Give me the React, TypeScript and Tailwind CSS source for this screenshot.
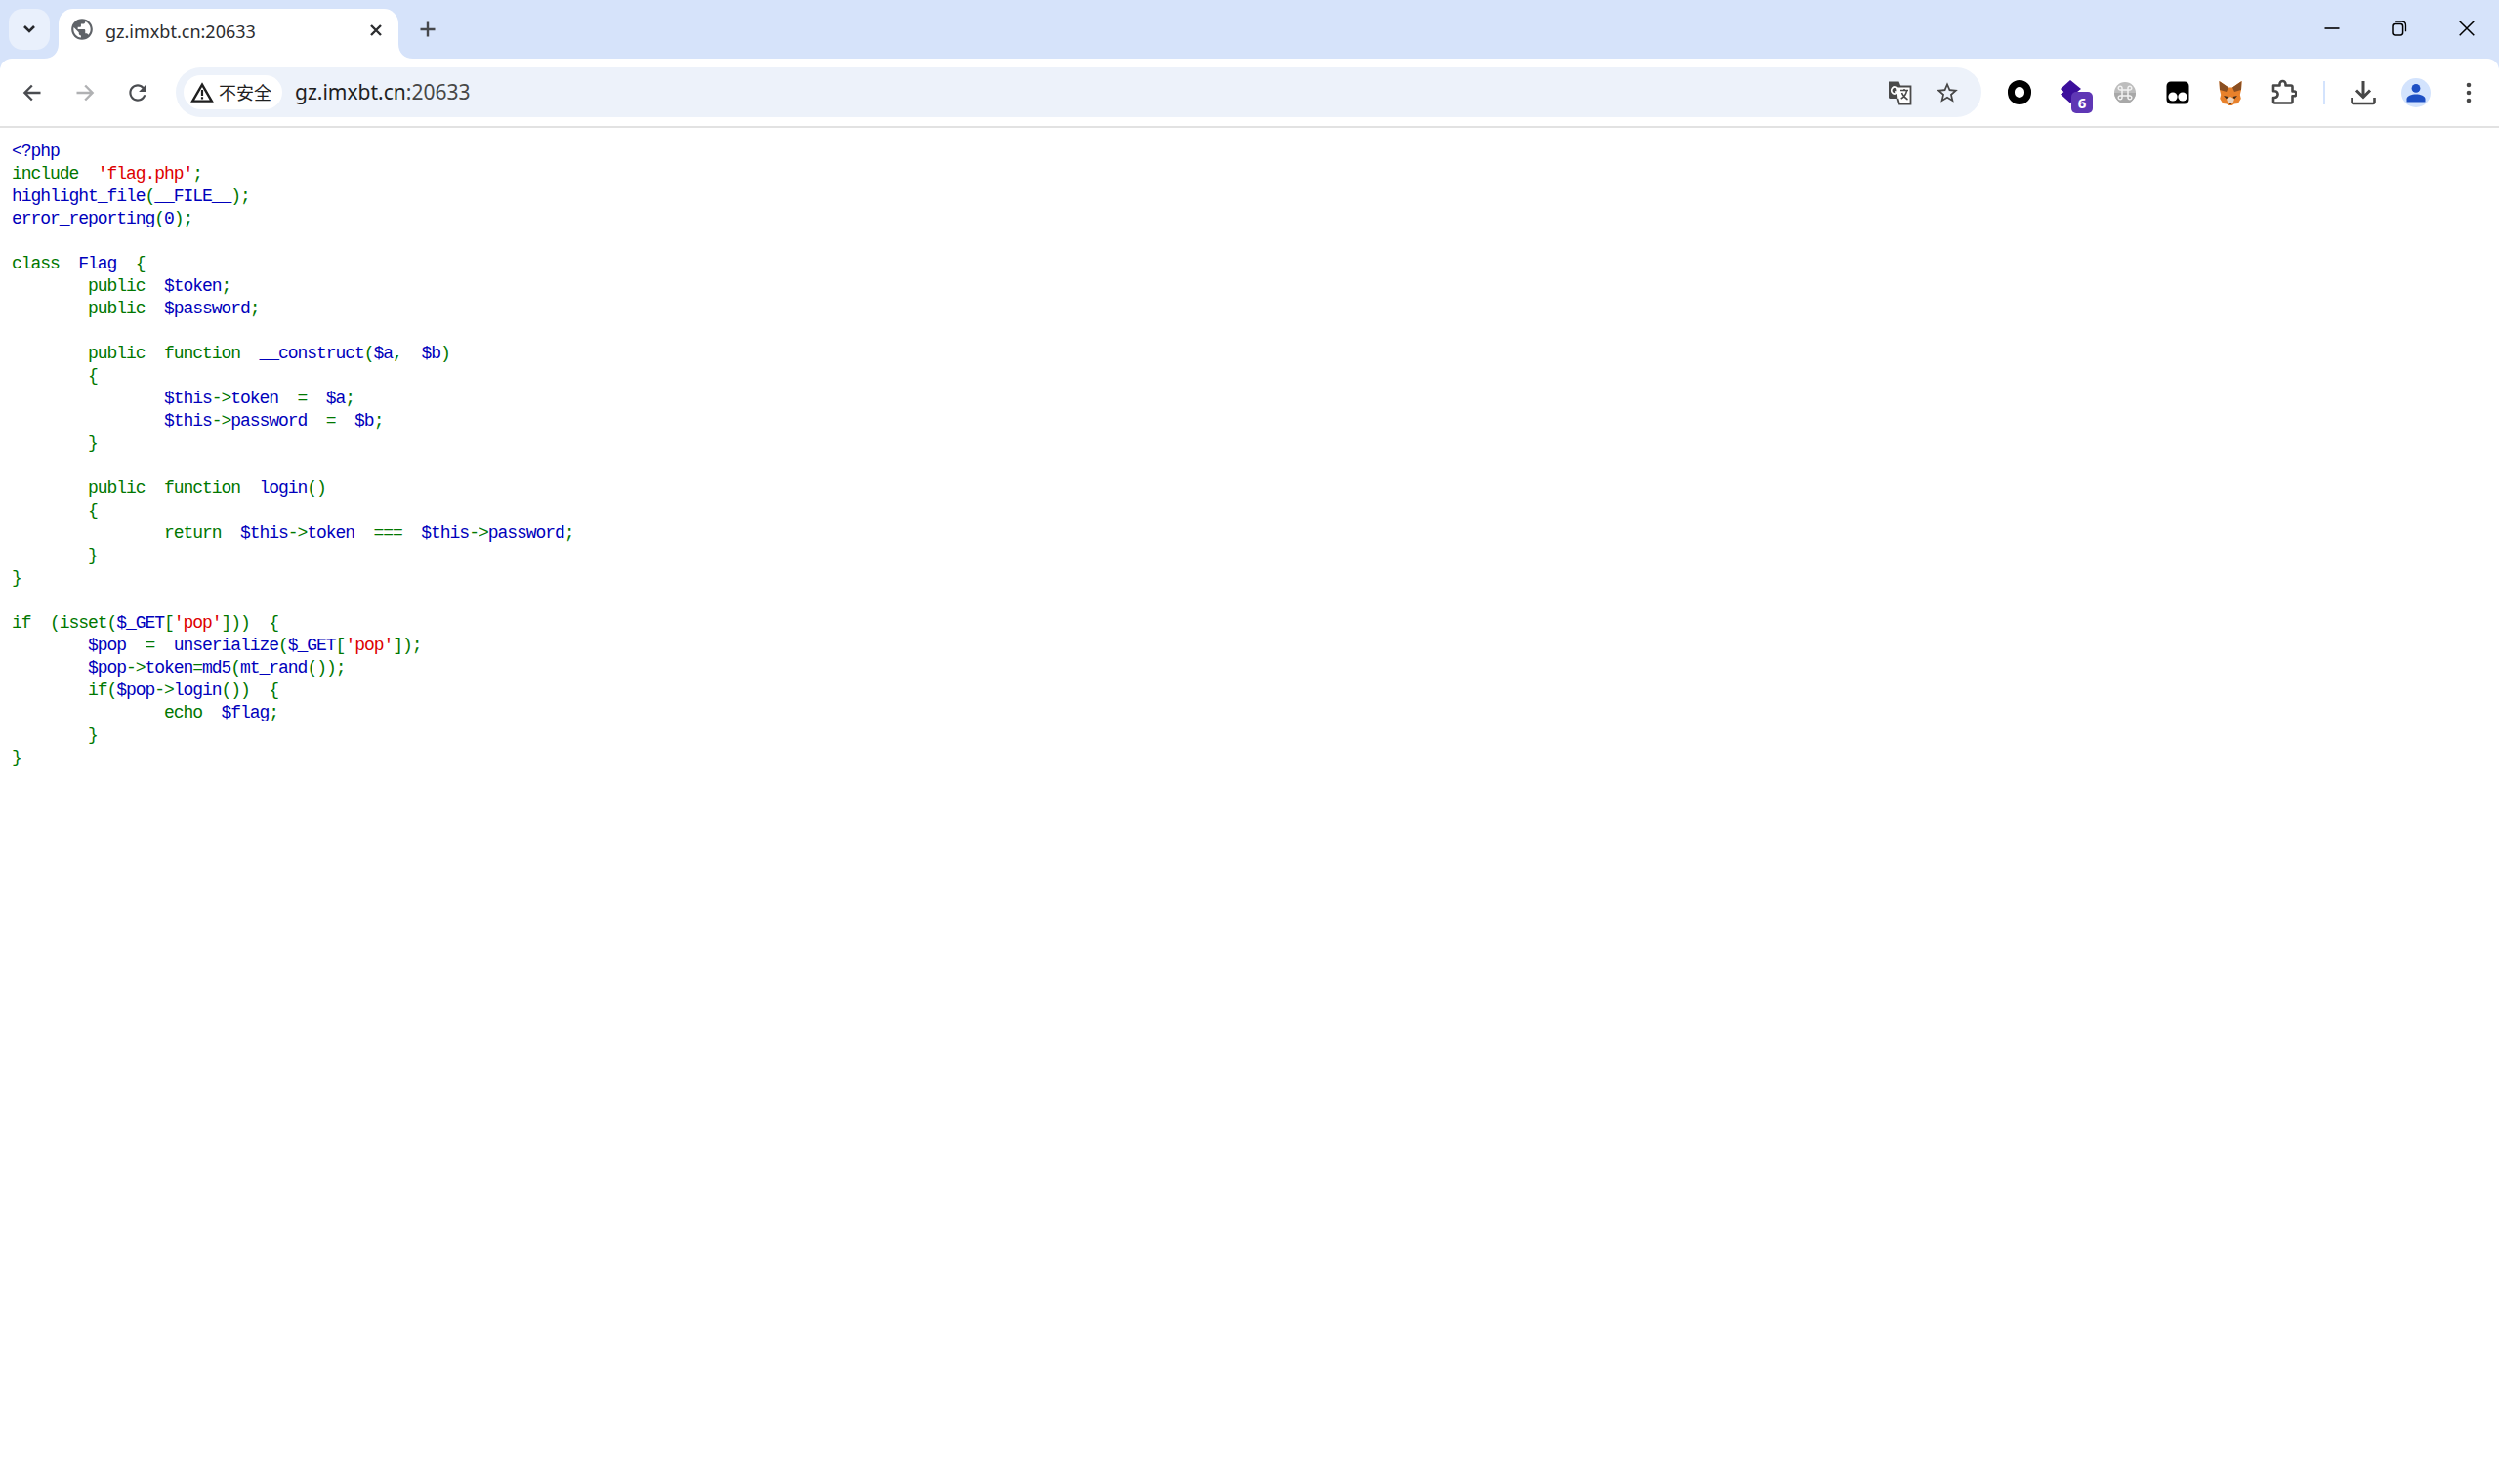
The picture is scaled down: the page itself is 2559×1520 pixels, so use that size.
import React from "react";

type T = [0 | 1 | 2, string];
const cls = ["text-[#007700]", "text-[#0000bb]", "text-[#dd0000]"];
const K = (s: string): T => [0, s];
const D = (s: string): T => [1, s];
const S = (s: string): T => [2, s];

const code: T[][] = [
  [D("<?php")],
  [K("include  "), S("'flag.php'"), K(";")],
  [D("highlight_file"), K("("), D("__FILE__"), K(");")],
  [D("error_reporting"), K("("), D("0"), K(");")],
  [],
  [K("class  "), D("Flag  "), K("{")],
  [K("        public  "), D("$token"), K(";")],
  [K("        public  "), D("$password"), K(";")],
  [],
  [K("        public  function  "), D("__construct"), K("("), D("$a"), K(",  "), D("$b"), K(")")],
  [K("        {")],
  [D("                $this"), K("->"), D("token  "), K("=  "), D("$a"), K(";")],
  [D("                $this"), K("->"), D("password  "), K("=  "), D("$b"), K(";")],
  [K("        }")],
  [],
  [K("        public  function  "), D("login"), K("()")],
  [K("        {")],
  [K("                return  "), D("$this"), K("->"), D("token  "), K("===  "), D("$this"), K("->"), D("password"), K(";")],
  [K("        }")],
  [K("}")],
  [],
  [K("if  (isset("), D("$_GET"), K("["), S("'pop'"), K("]))  {")],
  [D("        $pop  "), K("=  "), D("unserialize"), K("("), D("$_GET"), K("["), S("'pop'"), K("]);")],
  [D("        $pop"), K("->"), D("token"), K("="), D("md5"), K("("), D("mt_rand"), K("());")],
  [K("        if("), D("$pop"), K("->"), D("login"), K("())  {")],
  [K("                echo  "), D("$flag"), K(";")],
  [K("        }")],
  [K("}")],
];

function Flare({ side }: { side: "l" | "r" }) {
  return (
    <svg
      width="15"
      height="15"
      viewBox="0 0 15 15"
      className={side === "l" ? "absolute -left-[15px] bottom-0" : "absolute -right-[15px] bottom-0"}
    >
      {side === "l" ? <path d="M15 0V15H0C9 15 15 9 15 0Z" fill="#fff" /> : <path d="M0 0V15H15C6 15 0 9 0 0Z" fill="#fff" />}
    </svg>
  );
}

function Btn({ children, className = "" }: { children: React.ReactNode; className?: string }) {
  return <div className={"w-[54px] h-[54px] flex items-center justify-center shrink-0 relative " + className}>{children}</div>;
}

export default function App() {
  return (
    <div className="min-h-screen bg-white flex flex-col font-['Noto_Sans','Noto_Sans_CJK_SC',sans-serif]">
      <header className="bg-[#d6e3fa] shrink-0">
        {/* tab strip */}
        <div className="h-[60px] flex items-start pt-[9px] pl-[9px]">
          <div className="w-[42px] h-[42px] rounded-[14px] bg-[#e9f0fc] flex items-center justify-center">
            <svg width="14" height="10" viewBox="0 0 14 10" fill="none">
              <path d="M2 2 7 7l5-5" stroke="#26282c" strokeWidth="2.6" />
            </svg>
          </div>
          <div className="ml-[9px] w-[348px] h-[51px] bg-white rounded-t-[15px] relative flex items-center pl-[11px] pr-[16px]">
            <Flare side="l" />
            <Flare side="r" />
            <svg width="26" height="26" viewBox="0 0 24 24" fill="#5f6368" className="shrink-0 -mt-[9px]">
              <path d="M12 2C6.48 2 2 6.48 2 12s4.48 10 10 10 10-4.48 10-10S17.52 2 12 2zm-1 17.93c-3.95-.49-7-3.85-7-7.93 0-.62.08-1.21.21-1.79L9 15v1c0 1.1.9 2 2 2v1.93zm6.9-2.54c-.26-.81-1-1.39-1.9-1.39h-1v-3c0-.55-.45-1-1-1H8v-2h2c.55 0 1-.45 1-1V7h2c1.1 0 2-.9 2-2v-.41c2.93 1.19 5 4.06 5 7.41 0 2.08-.8 3.97-2.1 5.39z" />
            </svg>
            <span className="ml-[11px] text-[18px] leading-[24px] text-[#2c2d30] -mt-[6px]">gz.imxbt.cn:20633</span>
            <svg width="14" height="14" viewBox="0 0 14 14" fill="none" className="ml-auto -mt-[7px]">
              <path d="M2 2l10 10M12 2 2 12" stroke="#2c2d30" strokeWidth="2.4" />
            </svg>
          </div>
          <div className="ml-[9px] w-[42px] h-[42px] flex items-center justify-center">
            <svg width="16" height="16" viewBox="0 0 16 16" fill="none">
              <path d="M8 0.5v15M0.5 8h15" stroke="#46484c" strokeWidth="2.4" />
            </svg>
          </div>
          <div className="ml-auto flex items-center h-[40px]">
            <div className="w-[66px] flex justify-center">
              <svg width="16" height="16" viewBox="0 0 16 16" fill="none">
                <path d="M0.500 8h15" stroke="#000" strokeWidth="1.6" />
              </svg>
            </div>
            <div className="w-[72px] flex justify-center">
              <svg width="16" height="16" viewBox="0 0 16 16" fill="none">
                <rect x="1" y="3.600" width="10.600" height="11.400" rx="2.400" stroke="#000" strokeWidth="1.500" />
                <path d="M4.200 1h6.300c2.300 0 4 1.700 4 4v6.200" stroke="#000" strokeWidth="1.300" />
              </svg>
            </div>
            <div className="w-[66px] flex justify-center">
              <svg width="16" height="16" viewBox="0 0 16 16" fill="none">
                <path d="M0.700 0.700 15.300 15.300M15.300 0.700 0.700 15.300" stroke="#000" strokeWidth="1.500" />
              </svg>
            </div>
          </div>
        </div>
        {/* toolbar */}
        <div className="h-[69px] bg-white rounded-t-[12px] flex items-center pl-[6px] pr-[4px] text-[#474747]">
          <Btn>
            <svg width="20" height="20" viewBox="0 0 20 20" fill="none">
              <path d="M18.500 10H2.500M9.800 2.500 2.400 10l7.400 7.500" stroke="#4a4c50" strokeWidth="2.400" />
            </svg>
          </Btn>
          <Btn>
            <svg width="20" height="20" viewBox="0 0 20 20" fill="none">
              <path d="M1.500 10h16M10.200 2.500 17.600 10l-7.400 7.500" stroke="#b0b1b3" strokeWidth="2.400" />
            </svg>
          </Btn>
          <Btn>
            <svg width="26" height="26" viewBox="0 0 24 24" fill="#4a4c50">
              <path d="M17.650 6.350C16.200 4.900 14.210 4 12 4c-4.420 0-7.990 3.580-7.990 8s3.570 8 7.990 8c3.730 0 6.840-2.550 7.730-6h-2.080c-.82 2.330-3.040 4-5.650 4-3.310 0-6-2.690-6-6s2.690-6 6-6c1.660 0 3.140.69 4.220 1.780L13 11h7V4l-2.350 2.350z" />
            </svg>
          </Btn>
          <div className="ml-[12px] flex-1 h-[51px] rounded-full bg-[#edf2fa] flex items-center pl-[8px] pr-[22px] min-w-0">
            <div className="w-[101px] h-[35px] rounded-full bg-white flex items-center pl-[7px] shrink-0">
              <svg width="24" height="22" viewBox="0 0 24 22" fill="none" className="shrink-0">
                <path d="M12 2.600 21.800 19.600H2.200Z" stroke="#1f1f1f" strokeWidth="2.400" />
                <path d="M12 8v6M12 15.200v2.200" stroke="#1f1f1f" strokeWidth="2.200" />
              </svg>
              <span className="ml-[5px] text-[18px] leading-[24px] text-[#1f1f1f] whitespace-nowrap">不安全</span>
            </div>
            <span className="ml-[13px] -mt-[1px] text-[21px] leading-[28px] text-[#1f1f1f] whitespace-nowrap">
              gz.imxbt.cn<span className="text-[#474747]">:20633</span>
            </span>
            <svg width="26" height="26" viewBox="0 0 26 26" className="ml-auto shrink-0" fill="none">
              <path d="M2 1.500h10.500l2 5V19H3.500A1.500 1.500 0 0 1 2 17.500Z" fill="#4a4a4a" />
              <path d="M10 6.500h14.500v18H13l-1.600-5.500" stroke="#4a4a4a" strokeWidth="1.800" fill="#fff" />
              <path d="M11.200 8.400A3.600 3.600 0 1 0 11.600 12H8" stroke="#fff" strokeWidth="1.700" />
              <path d="M14 10.500h8M18 9v2M20.500 11c-.8 4-3 6.500-5.800 8M15.500 13c1 3 3.500 5.500 6 7" stroke="#4a4a4a" strokeWidth="1.500" />
            </svg>
            <svg width="26" height="26" viewBox="0 0 24 24" fill="#474747" className="ml-[23px] shrink-0">
              <path d="M22 9.240l-7.190-.62L12 2 9.190 8.630 2 9.240l5.460 4.730L5.820 21 12 17.270 18.180 21l-1.630-7.030L22 9.240zM12 15.400l-3.760 2.270 1-4.280-3.320-2.880 4.380-.38L12 6.100l1.710 4.040 4.380.38-3.320 2.880 1 4.280L12 15.400z" />
            </svg>
          </div>
          <div className="ml-[12px] flex items-center shrink-0">
            <Btn>
              <div className="w-[24px] h-[25px] rounded-full border-[7px] border-black" />
            </Btn>
            <Btn>
              <svg width="26" height="26" viewBox="0 0 26 26" className="-ml-[4px] -mt-[2px]">
                <path d="M13 1 24 10 13 18.500 3 10Z" fill="#3c0f9c" />
                <path d="M3 10 6.500 13 3 15.500 13 24.500 20 18 13 13Z" fill="#3c0f9c" />
              </svg>
              <span className="absolute left-[26px] top-[26px] w-[22px] h-[22px] rounded-[5px] bg-[#5f37b5] text-white text-[15px] leading-[22px] font-bold text-center">6</span>
            </Btn>
            <Btn>
              <svg width="24" height="24" viewBox="0 0 24 24" fill="none">
                <circle cx="12" cy="12" r="11" fill="#bdbdbd" />
                <path d="M1 12h22v0A11 11 0 0 1 1 12Z" fill="#a8a8a8" />
                <path d="M9 9h6v6H9ZM9 9H7.200a1.900 1.900 0 1 1 1.800-1.800ZM15 9V7.200A1.900 1.900 0 1 1 16.800 9ZM15 15h1.800a1.900 1.900 0 1 1-1.800 1.800ZM9 15v1.800A1.900 1.900 0 1 1 7.200 15Z" stroke="#f2f2f2" strokeWidth="1.500" />
              </svg>
            </Btn>
            <Btn>
              <svg width="24" height="24" viewBox="0 0 24 24">
                <rect x="0.500" y="0.500" width="23" height="23" rx="4.500" fill="#000" />
                <circle cx="7" cy="16" r="4.600" fill="#fff" />
                <circle cx="17" cy="16" r="4.600" fill="#fff" />
              </svg>
            </Btn>
            <Btn>
              <svg width="26" height="26" viewBox="0 0 26 26">
                <path d="M1.500 1 11 7.500h4L24.500 1l-.5 9-1.200 5 1 4-3 5-4 .5-2 1.500h-3.600l-2-1.500-4-.5-3-5 1-4L2 10Z" fill="#e8812b" />
                <path d="M1.500 1 11 7.500 9 12 2 10ZM24.500 1 15 7.500 17 12l7-2Z" fill="#8a4f22" />
                <path d="M6 16l4.500 1-1.500 2.500ZM20 16l-4.500 1 1.500 2.500Z" fill="#3c2a1c" />
                <path d="M9 19.500 13 17l4 2.500-1.500 4h-5Z" fill="#e9d3bf" />
                <path d="M11.200 23h3.600L13 25.500Z" fill="#3c2a1c" />
              </svg>
            </Btn>
            <Btn>
              <svg width="28" height="28" viewBox="0 0 28 28" fill="none">
                <path d="M4 6.500h6.500V5a3 3 0 0 1 6 0v1.500H22a1.500 1.500 0 0 1 1.500 1.500v4.500H25a2.400 2.400 0 0 1 0 4.800h-1.500V23a1.500 1.500 0 0 1-1.500 1.500H5.500A1.500 1.500 0 0 1 4 23v-4h1.200a3.400 3.400 0 0 0 0-6.800H4Z" stroke="#474747" strokeWidth="2.600" strokeLinejoin="round" />
              </svg>
            </Btn>
            <div className="ml-[14px] w-[2px] h-[24px] bg-[#d3e3fd] shrink-0" />
            <Btn className="ml-[12px]">
              <svg width="28" height="28" viewBox="0 0 28 28" fill="none">
                <path d="M14 2v16M7 11.500l7 7 7-7" stroke="#474747" strokeWidth="3" />
                <path d="M2.500 19v4.500a1.500 1.500 0 0 0 1.500 1.500h20a1.500 1.500 0 0 0 1.500-1.500V19" stroke="#474747" strokeWidth="2.600" />
              </svg>
            </Btn>
            <Btn>
              <div className="w-[30px] h-[30px] rounded-full bg-[#d3e3fd] flex items-center justify-center">
                <svg width="20" height="20" viewBox="0 0 20 20" fill="#1d4fc4">
                  <circle cx="10" cy="5.400" r="4.400" />
                  <path d="M0.500 19.500v-3c0-3.200 5-5 9.500-5s9.500 1.800 9.500 5v3Z" />
                </svg>
              </div>
            </Btn>
            <Btn>
              <svg width="6" height="24" viewBox="0 0 6 24" fill="#474747">
                <circle cx="3" cy="4" r="2.300" />
                <circle cx="3" cy="12" r="2.300" />
                <circle cx="3" cy="20" r="2.300" />
              </svg>
            </Btn>
          </div>
        </div>
        <div className="h-[2px] bg-[#e2e2e2]" />
      </header>
      <main className="px-[12px] pt-[13px] text-[18px] tracking-[-1.05px] leading-[23px]">
        <code className="block whitespace-pre font-['Liberation_Mono',monospace]">
          {code.map((line, i) => (
            <div key={i} className="h-[23px]">
              {line.map(([c, t], j) => (
                <span key={j} className={cls[c]}>
                  {t}
                </span>
              ))}
            </div>
          ))}
        </code>
      </main>
    </div>
  );
}
